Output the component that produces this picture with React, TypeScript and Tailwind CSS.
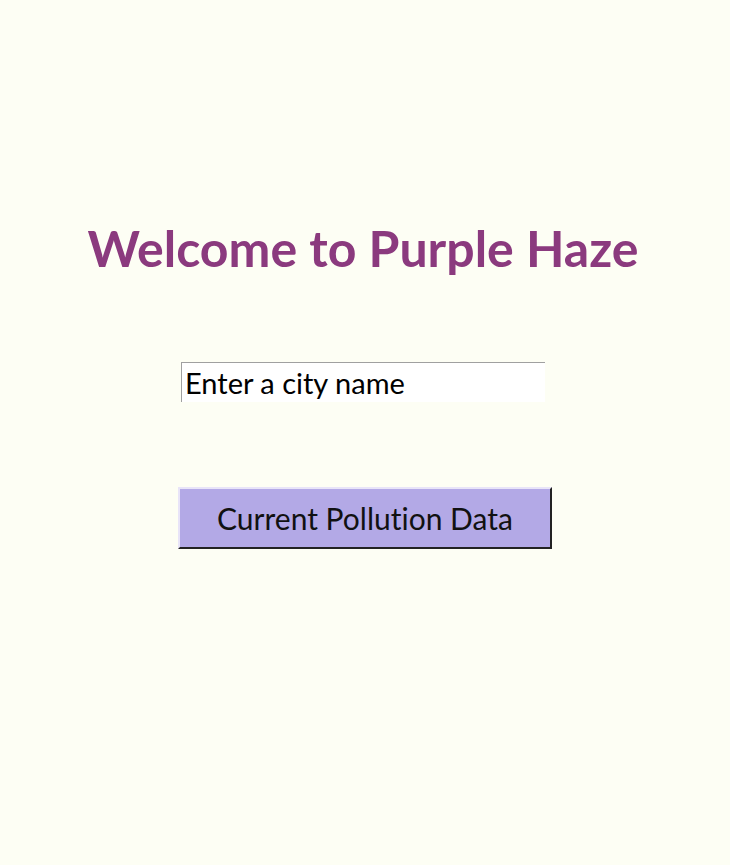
export default function App() {
  return (
    <div
      className="min-h-[865px] w-full bg-[#fdfef4] flex flex-col items-center pt-[217px] pr-[4px] [font-variant-ligatures:none]"
      style={{ fontFamily: 'Lato, "Open Sans", sans-serif' }}
    >
      <h1 className="text-[50px] leading-[62px] font-bold text-[#8b3a7e]">
        Welcome to Purple Haze
      </h1>

      <input
        type="text"
        placeholder="Enter a city name"
        className="mt-[83px] w-[364px] h-[40px] bg-white border-t border-l border-[#a0a0a0] border-r-0 border-b-0 px-[3px] text-[29px] text-black placeholder:text-black outline-none [font-variant-ligatures:none]"
      />

      <button
        type="button"
        className="mt-[85px] ml-[4px] w-[374px] h-[62px] bg-[#b3a9e6] border-2 border-t-[#e8e4f8] border-l-[#e8e4f8] border-r-[#222] border-b-[#222] text-[30px] text-[#111] [font-variant-ligatures:none]"
      >
        Current Pollution Data
      </button>
    </div>
  );
}
